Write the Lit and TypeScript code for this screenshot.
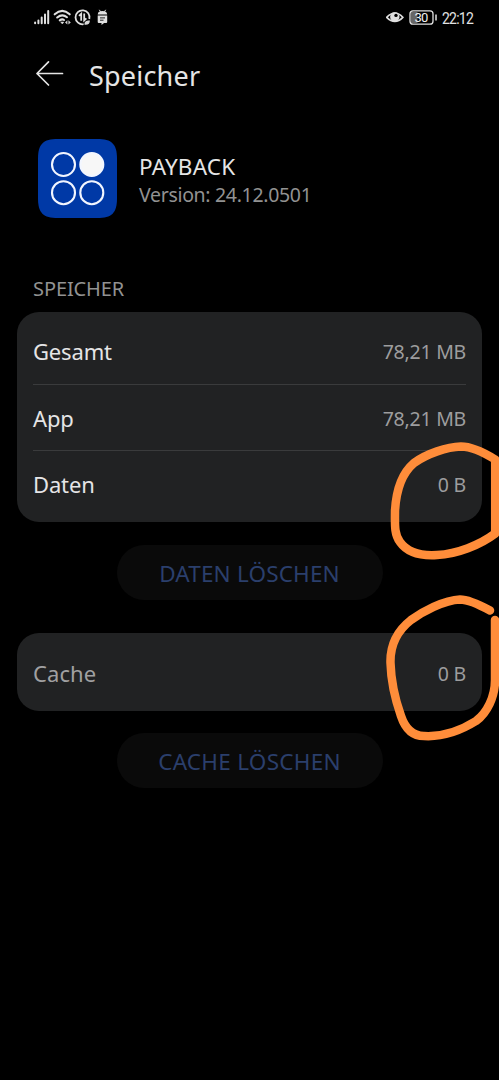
import { LitElement, html, css, svg } from "lit";
import { customElement, property } from "lit/decorators.js";

@customElement("status-bar")
class StatusBar extends LitElement {
  static styles = css`
    :host { display: flex; justify-content: space-between; height: 36px; padding: 0 26px 0 33px; box-sizing: border-box; }
    svg { display: block; }
    .right { display: flex; }
    .time { font-size: 16.5px; line-height: 37px; letter-spacing: -0.9px; color: #e2e2e2; width: 31px; margin-left: 5px; white-space: nowrap; font-family: Roboto, sans-serif; transform: scaleX(0.85); transform-origin: left; }
    .pct { font: 13px Roboto, sans-serif; letter-spacing: -0.9px; }
  `;
  render() {
    return html`
      <svg width="80" height="36" viewBox="33 0 80 36" fill="none" stroke="#e0e0e0">
        <g stroke-width="2" stroke-linecap="round">
          <path d="M35.1 22.6v.6M38.4 20.6v2.6M41.7 17.6v5.6M45 14.6v8.6M48.2 11v12.2"/>
        </g>
        <g stroke-width="2.1" stroke-linecap="round">
          <path d="M54.7 14.3Q62.2 7.6 69.7 14.3M57.2 17.5Q62.2 13.3 67 17.2M59.8 20.4Q62 18.6 64 20"/>
        </g>
        <path d="M60.8 22.1l1.5 1.9 1.4-1.9z" fill="#e0e0e0" stroke-width=".6"/>
        <path d="M67.4 20.3l-2.4 2.1 2.4 2.1zM68.4 20.3l2.4 2.1-2.4 2.1z" fill="#d0d0d0" stroke="none"/>
        <path d="M89.3 19A7 7 0 1 0 83.6 24.2" stroke-width="1.8"/>
        <path d="M81.2 20.8v-7l-2.2 2M84.2 13.4v7l2.2-2" stroke-width="1.8"/>
        <path d="M84.5 24.8c-.3-3.4 1.8-4.3 5.4-4.2 0 3-1.7 4.6-5.4 4.2z" fill="#d8d8d8" stroke="none"/>
        <path d="M97.7 14.4c.3-2.4 1.8-3.4 4.7-3.4s4.5 1 4.8 3.4zM97.7 15.4h9.5v6.5q0 1-1 1h-2.1l-2.6 2.2v-2.2h-2.8q-1 0-1-1z" fill="#e0e0e0" stroke="none"/>
        <path d="M99.3 9.8l1.3 2M105.7 9.8l-1.3 2" stroke-width="1"/>
        <path d="M100 17.9h5M100 20.2h3.5" stroke="#222" stroke-width="1"/>
      </svg>
      <div class="right">
        <svg width="51" height="36" viewBox="386 0 51 36" fill="none" stroke="#e0e0e0">
          <path d="M386.7 17.3Q395 8.7 402.8 17.3Q395 25.5 386.7 17.3z" stroke-width="1.7"/>
          <circle cx="394.8" cy="17" r="4.7" fill="#e0e0e0" stroke="none"/>
          <circle cx="396" cy="15.4" r="1.7" fill="#000" stroke="none"/>
          <rect x="411" y="12" width="6.5" height="11" fill="#666" stroke="none"/>
          <rect x="410" y="10.8" width="23" height="13.4" rx="3" stroke-width="1.3"/>
          <path d="M436 14.5v6" stroke-width="1.5"/>
          <text class="pct" x="421" y="22.1" text-anchor="middle" fill="#f2f2f2" stroke="none">30</text>
        </svg>
        <span class="time">22:12</span>
      </div>`;
  }
}

@customElement("storage-row")
class StorageRow extends LitElement {
  @property() label = "";
  @property() value = "";
  @property({ type: Boolean }) dim = false;
  static styles = css`
    :host { display: flex; align-items: center; justify-content: space-between; }
    .label { font-size: 22px; color: #e5e5e6; letter-spacing: -0.15px; font-weight: 450; }
    .label.dim { color: #a0a0a1; letter-spacing: 0.1px; }
    .value { font-size: 19.5px; color: #9d9d9e; letter-spacing: -0.25px; padding-top: 1px; }
  `;
  render() {
    return html`<span class="label ${this.dim ? "dim" : ""}">${this.label}</span><span class="value">${this.value}</span>`;
  }
}

@customElement("app-root")
class AppRoot extends LitElement {
  static styles = css`
    :host { display: block; position: relative; width: 499px; height: 1080px; overflow: hidden; background: #000; font-family: "Noto Sans", sans-serif; color: #e5e5e5; }
    svg { display: block; }
    .bar { display: flex; align-items: center; height: 76px; padding-left: 35px; gap: 25px; }
    .title { margin: 0; padding-top: 3px; font-size: 27px; font-weight: 450; line-height: 36px; letter-spacing: 0.2px; }
    .app { display: flex; gap: 22px; padding: 27px 0 0 38px; height: 79px; }
    .meta { padding-top: 14px; }
    .name { font-size: 22.5px; line-height: 28px; letter-spacing: 0.2px; }
    .version { font-size: 19.5px; line-height: 28px; color: #929292; letter-spacing: -0.32px; }
    .section { margin: 56px 0 0 33px; height: 38px; line-height: 30px; font-size: 20px; color: #929292; letter-spacing: -0.1px; }
    .card { margin: 0 17px; padding: 0 16px; border-radius: 22px; background: #212223; box-sizing: border-box; }
    .main { height: 210px; padding-top: 6px; }
    .main storage-row { height: 66px; box-sizing: border-box; }
    .main storage-row + storage-row { border-top: 1px solid #3a3b3c; }
    .cache { height: 78px; }
    .cache storage-row { height: 79px; }
    .button { display: block; width: 266px; height: 55px; margin: 23px auto 33px; padding: 1px 0 0; border: 0; border-radius: 28px; background: #0a0a0a; color: #2b3f6c; font: 22.5px "Noto Sans", sans-serif; letter-spacing: 0.17px; }
    .cache + .button { margin-top: 22px; letter-spacing: 0.27px; }
    .marks { position: absolute; left: 0; top: 0; pointer-events: none; }
  `;
  render() {
    return html`
      <status-bar></status-bar>
      <header class="bar">
        <svg width="29" height="28" viewBox="0 0 29 28" fill="none" stroke="#e5e5e5" stroke-width="1.7" stroke-linecap="round" stroke-linejoin="round">
          <path d="M27.5 13.5H2M13.5 1.8L2 13.5 13.5 25"/>
        </svg>
        <h1 class="title">Speicher</h1>
      </header>
      <section class="app">
        <svg width="79" height="79" viewBox="0 0 79 79">
          <path d="M20 0H59C74 0 79 5 79 20V59C79 74 74 79 59 79H20C5 79 0 74 0 59V20C0 5 5 0 20 0z" fill="#0039a6"/>
          ${[[25.5, 25.5, 0], [53.8, 25.5, 1], [25.5, 53.7, 0], [53.8, 53.7, 0]].map(([x, y, full]) => svg`<circle cx=${x} cy=${y} r="11.5" fill=${full ? "#f7f7f7" : "none"} stroke="#f2f6ff" stroke-width="2.1"/>`)}
        </svg>
        <div class="meta">
          <div class="name">PAYBACK</div>
          <div class="version">Version: 24.12.0501</div>
        </div>
      </section>
      <div class="section">SPEICHER</div>
      <section class="card main">
        <storage-row label="Gesamt" value="78,21 MB"></storage-row>
        <storage-row label="App" value="78,21 MB"></storage-row>
        <storage-row label="Daten" value="0 B"></storage-row>
      </section>
      <button class="button">DATEN LÖSCHEN</button>
      <section class="card cache">
        <storage-row label="Cache" value="0 B" dim></storage-row>
      </section>
      <button class="button">CACHE LÖSCHEN</button>
      <svg class="marks" width="499" height="1080" fill="none" stroke="#ff8d3a" stroke-width="8.5" stroke-linecap="round" stroke-linejoin="round">
        <path d="M495.200 459.500C483 452 472 446.500 461 446.500C447 447 427 453.500 414 463C401 474 396 493 395 511C395 524 394 534 400 542C407 552 421 556 437 555C457 554 480 545 495.200 533.500V459.500"/>
        <path d="M490 610.500C478 604 468 599.500 460 599.500C444 600 422 612 411 620C397 631 390 645 390.500 663C391 681 395 699 401 716C405 728 412 736 424 736C441 737 460 731 476 721C487 713 495 697 495 680V620"/>
      </svg>`;
  }
}
